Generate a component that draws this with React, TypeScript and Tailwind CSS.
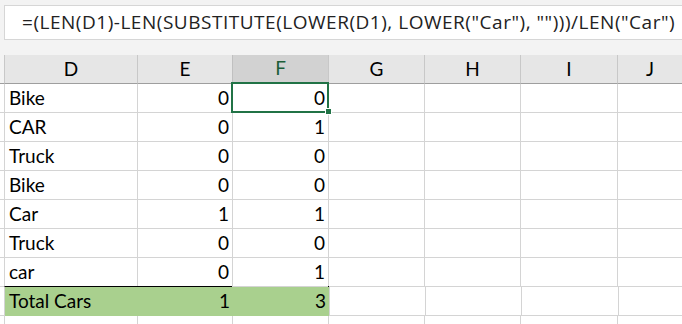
import React from 'react';

const cols = [
  { key: 'D', w: 'w-[133px]' },
  { key: 'E', w: 'w-[95px]' },
  { key: 'F', w: 'w-[96px]' },
  { key: 'G', w: 'w-[96px]' },
  { key: 'H', w: 'w-[96px]' },
  { key: 'I', w: 'w-[97px]' },
  { key: 'J', w: 'w-[65px]' },
];

const rows: [string, number, number][] = [
  ['Bike', 0, 0],
  ['CAR', 0, 1],
  ['Truck', 0, 0],
  ['Bike', 0, 0],
  ['Car', 1, 1],
  ['Truck', 0, 0],
  ['car', 0, 1],
];

const cell = 'h-[29px] shrink-0 border-l border-b border-[#d4d4d4] flex items-center';

export default function App() {
  return (
    <div className="w-[682px] h-[324px] overflow-hidden bg-white font-['Lato',sans-serif] text-[19px] text-black">
      {/* formula bar */}
      <div className="h-[55px] bg-[#f3f3f3] pt-[5px] pl-[4px]">
        <div className="h-[35px] bg-white border border-r-0 border-[#d6d6d6] flex items-center pl-[17px] font-['Open_Sans',sans-serif] text-[19px] tracking-[0.52px] whitespace-nowrap text-[#222]">
          =(LEN(D1)-LEN(SUBSTITUTE(LOWER(D1), LOWER("Car"), "")))/LEN("Car")
        </div>
      </div>

      {/* column headers */}
      <div className="flex bg-[#f3f3f3]">
        <div className="w-[4px] h-[29px] shrink-0 border-b border-[#9e9e9e]" />
        {cols.map((c) => (
          <div
            key={c.key}
            className={`${c.w} h-[29px] shrink-0 flex items-center justify-center border-l ${
              c.key === 'F'
                ? 'bg-[#d2d2d2] text-[#1d5e38] border-[#c0c0c0] border-b-2 border-b-[#217346]'
                : 'bg-[#e6e6e6] border-[#c8c8c8] border-b border-b-[#9e9e9e]'
            }`}
          >
            {c.key}
          </div>
        ))}
      </div>

      {/* data rows */}
      {rows.map(([name, e, f], i) => (
        <div key={i} className="flex">
          <div className="w-[4px] h-[29px] shrink-0 border-b border-[#d4d4d4]" />
          <div className={`${cell} w-[133px] pl-[4px]`}>{name}</div>
          <div className={`${cell} w-[95px] justify-end pr-[3px]`}>{e}</div>
          <div className={`${cell} w-[96px] justify-end pr-[3px] relative`}>
            {f}
            {i === 0 && (
              <>
                <div className="absolute left-[-2px] top-[-2px] w-[98px] h-[31px] border-2 border-[#217346]" />
                <div className="absolute right-[-4px] bottom-[-3px] w-[7px] h-[7px] bg-[#217346] border border-white" />
              </>
            )}
          </div>
          <div className={`${cell} w-[96px]`} />
          <div className={`${cell} w-[96px]`} />
          <div className={`${cell} w-[97px]`} />
          <div className={`${cell} w-[65px]`} />
        </div>
      ))}

      {/* total row */}
      <div className="flex">
        <div className="w-[4px] h-[29px] shrink-0 border-b border-[#d4d4d4]" />
        <div className="flex shrink-0 bg-[#a9d08e] border-t border-black h-[30px] -mt-[1px] border-l border-l-[#d4d4d4]">
          <div className="w-[132px] h-full flex items-center pl-[4px]">Total Cars</div>
          <div className="w-[96px] h-full flex items-center justify-end pr-[3px]">1</div>
          <div className="w-[96px] h-full flex items-center justify-end pr-[3px]">3</div>
        </div>
        <div className={`${cell} w-[96px]`} />
        <div className={`${cell} w-[96px]`} />
        <div className={`${cell} w-[97px]`} />
        <div className={`${cell} w-[65px]`} />
      </div>

      {/* partial row below */}
      <div className="flex">
        <div className="w-[4px] h-[29px] shrink-0" />
        <div className={`${cell} w-[133px]`} />
        <div className={`${cell} w-[95px]`} />
        <div className={`${cell} w-[96px]`} />
        <div className={`${cell} w-[96px]`} />
        <div className={`${cell} w-[96px]`} />
        <div className={`${cell} w-[97px]`} />
        <div className={`${cell} w-[65px]`} />
      </div>
    </div>
  );
}
